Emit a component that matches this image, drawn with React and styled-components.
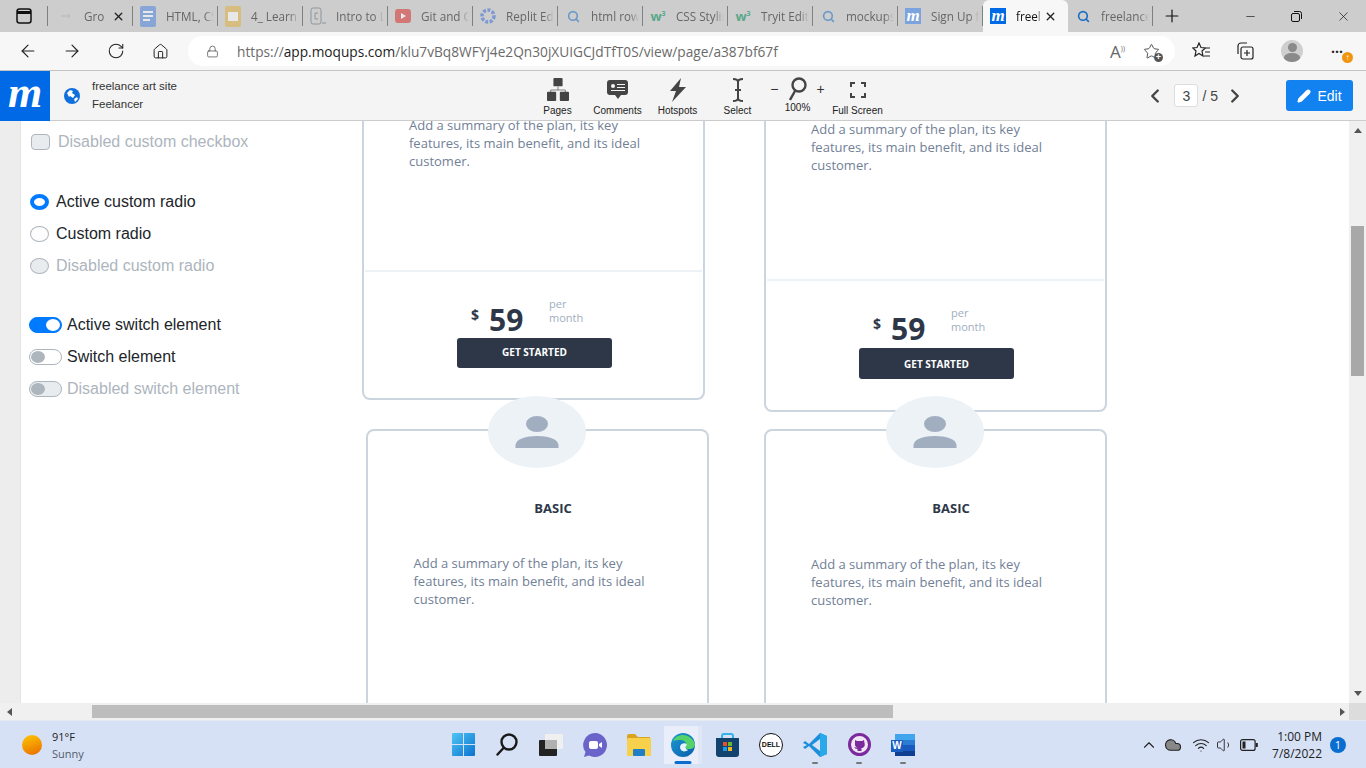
import React from 'react';
import styled, { createGlobalStyle } from 'styled-components';
import { ArrowLeft, ArrowRight, RotateCw, Home, Lock, Star, ChevronLeft, ChevronRight, Pencil, X, Plus, Minus, Search, ChevronUp, Cloud, Wifi, Volume1 } from 'lucide-react';

const GlobalStyle = createGlobalStyle`
  html, body { margin: 0; padding: 0; overflow: hidden; }
  * { box-sizing: border-box; }
  body { font-family: "Liberation Sans", Arial, sans-serif; }
`;

const tabs = [
  { title: 'Gro', icon: 'arrow', close: true, first: true },
  { title: 'HTML, CSS', icon: 'docs' },
  { title: '4_ Learn', icon: 'slides' },
  { title: 'Intro to L', icon: 'code' },
  { title: 'Git and G', icon: 'yt' },
  { title: 'Replit Ed', icon: 'replit' },
  { title: 'html row', icon: 'search' },
  { title: 'CSS Stylin', icon: 'w3' },
  { title: 'Tryit Edito', icon: 'w3' },
  { title: 'mockups', icon: 'search' },
  { title: 'Sign Up f', icon: 'moqups' },
  { title: 'freel', icon: 'moqupsActive', close: true, active: true },
  { title: 'freelance', icon: 'searchActive' },
];

const TabIcon = ({ kind }) => {
  if (kind === 'arrow') return <Faded><svg width="16" height="16" viewBox="0 0 16 16"><path d="M3 8h9M10 6l2 2-2 2" stroke="#9aa" fill="none" /></svg></Faded>;
  if (kind === 'docs') return <Faded><svg width="16" height="21" viewBox="0 0 16 21"><rect width="16" height="21" rx="2" fill="#4f86e0" /><path d="M3 6h10M3 10h10M3 14h7" stroke="#fff" strokeWidth="2" /></svg></Faded>;
  if (kind === 'slides') return <Faded><svg width="16" height="21" viewBox="0 0 16 21"><rect width="16" height="21" rx="2" fill="#e0b040" /><rect x="3" y="6" width="10" height="9" fill="#fff" /></svg></Faded>;
  if (kind === 'code') return <Faded><svg width="16" height="18" viewBox="0 0 16 18"><rect x="1" y="1" width="10" height="16" rx="2" fill="none" stroke="#567" /><path d="M8 6H5v6h3M12 16h4" stroke="#567" fill="none" /></svg></Faded>;
  if (kind === 'yt') return <Faded><svg width="16" height="16" viewBox="0 0 16 16"><rect y="1" width="16" height="14" rx="3" fill="#d93030" /><path d="M6 5l5 3-5 3z" fill="#fff" /></svg></Faded>;
  if (kind === 'replit') return <Faded><svg width="16" height="18" viewBox="0 0 16 18"><circle cx="8" cy="9" r="6" fill="none" stroke="#3d6fd8" strokeWidth="3.5" strokeDasharray="3 1.5" /></svg></Faded>;
  if (kind === 'w3') return <W3Mark>w<sup>3</sup></W3Mark>;
  if (kind === 'moqups') return <Favicon>m</Favicon>;
  if (kind === 'moqupsActive') return <Favicon $active>m</Favicon>;
  return <Faded $solid={kind === 'searchActive'}><Search size={13} color="#1a6ec4" strokeWidth={3} /></Faded>;
};

const Pages = () => (
  <svg width="22" height="24" viewBox="0 0 24 26" fill="#444">
    <rect x="7" y="0" width="10" height="9" rx="1" />
    <path d="M12 9v4M4 16v-3h16v3" stroke="#777" fill="none" />
    <rect x="0" y="15" width="10" height="10" rx="1" />
    <rect x="14" y="15" width="10" height="10" rx="1" />
  </svg>
);
const Comment = () => (
  <svg width="21" height="20" viewBox="0 0 21 20"><path d="M3 0h15a3 3 0 0 1 3 3v9a3 3 0 0 1-3 3h-4l-3 4-3-4H3a3 3 0 0 1-3-3V3a3 3 0 0 1 3-3z" fill="#444" /><circle cx="6" cy="6" r="2" fill="#f4f4f4" /><path d="M10 4.500h8M10 7.500h8M4 10.500h14" stroke="#f4f4f4" /></svg>
);
const Bolt = () => (
  <svg width="16" height="24" viewBox="0 0 16 24"><path d="M11 0L0 13h6l-4 11 14-15H9z" fill="#444" /></svg>
);
const Cursor = () => (
  <svg width="12" height="24" viewBox="0 0 12 24" fill="none" stroke="#444" strokeWidth="2"><path d="M1 1c3 0 5 1 5 3v16c0 2-2 3-5 3M11 1C8 1 6 2 6 4v16c0 2 2 3 5 3M3 12h6" /></svg>
);
const Magnifier = () => (
  <svg width="18" height="24" viewBox="0 0 18 24" fill="none" stroke="#444" strokeWidth="2.400"><circle cx="10" cy="8" r="6.500" /><path d="M6 14l-5 9" /></svg>
);
const Corners = () => (
  <svg width="16" height="16" viewBox="0 0 16 16" fill="none" stroke="#444" strokeWidth="2"><path d="M1 5V1h4M11 1h4v4M15 11v4h-4M5 15H1v-4" /></svg>
);
const Globe = () => (
  <svg width="16" height="16" viewBox="0 0 16 16"><circle cx="8" cy="8" r="8" fill="#0f6fdc" /><path d="M3 5l3-3 3 1-1 2 3 2-2 3-3-2-1 1zM10 11l3-2 1 2-3 3z" fill="#fff" /></svg>
);
const Person = () => (
  <svg width="44" height="32" viewBox="0 0 44 32" fill="#a0aec0"><ellipse cx="22" cy="8" rx="11" ry="8" /><path d="M0.500 32v-3C1 23 11 20 22 20s21 3 21.500 9v3z" /></svg>
);

const Windows = () => (
  <svg width="23" height="23" viewBox="0 0 23 23"><defs><linearGradient id="win" x1="0" y1="0" x2="1" y2="1"><stop offset="0" stopColor="#4fc6f5" /><stop offset="1" stopColor="#0a72cf" /></linearGradient></defs><path d="M1 0h10v11H0V1a1 1 0 0 1 1-1zM12 0h10a1 1 0 0 1 1 1v10H12zM0 12h11v11H1a1 1 0 0 1-1-1zM12 12h11v10a1 1 0 0 1-1 1H12z" fill="url(#win)" /></svg>
);
const TaskSearch = () => (
  <svg width="22" height="23" viewBox="0 0 22 23" fill="none" stroke="#1a1a1a" strokeWidth="2.400"><circle cx="13" cy="9" r="7.500" /><path d="M7.500 15l-6 6.500" strokeLinecap="round" /></svg>
);
const TaskView = () => (
  <svg width="24" height="22" viewBox="0 0 24 22"><rect x="0" y="6" width="18" height="16" rx="1" fill="#222" /><rect x="6" y="0" width="18" height="15" rx="1" fill="#f0f0f0" /><rect x="6" y="6" width="12" height="9" fill="#b0b0b0" /></svg>
);
const Meet = () => (
  <svg width="24" height="24" viewBox="0 0 24 24"><path d="M12 0a12 12 0 1 1-6 22.400L1 24l1.500-5A12 12 0 0 1 12 0z" fill="#6a63c9" /><rect x="6" y="8" width="9" height="8" rx="2" fill="#fff" /><path d="M16 11l3-2v6l-3-2z" fill="#fff" /></svg>
);
const Folder = () => (
  <svg width="24" height="22" viewBox="0 0 24 22"><path d="M0 2a2 2 0 0 1 2-2h6l3 3h12v4H0z" fill="#d9a520" /><rect y="4" width="24" height="18" rx="1.500" fill="#f7d04c" /><rect x="6" y="15" width="12" height="7" rx="1" fill="#1e7fc7" /></svg>
);
const Edge = () => (
  <svg width="24" height="24" viewBox="0 0 24 24"><defs><linearGradient id="edge" x1="0" y1="0" x2="1" y2="1"><stop offset="0" stopColor="#1d9ad6" /><stop offset="1" stopColor="#0a5ea8" /></linearGradient></defs><circle cx="12" cy="12" r="12" fill="url(#edge)" /><path d="M2 8C5 0 20-1 24 11c0 4-3 5-6 5-4 0-4-2-3-4 1-3-3-7-13-4z" fill="#54d36b" /><path d="M9 14c0-4 6-5 7-2-2 1-2 4 1 5-4 3-8 1-8-3z" fill="#e8f4fb" /></svg>
);
const Store = () => (
  <svg width="23" height="24" viewBox="0 0 23 24"><path d="M6 5V3a2 2 0 0 1 2-2h7a2 2 0 0 1 2 2v2" fill="none" stroke="#35b3e8" strokeWidth="2" /><path d="M0 5h23v16a3 3 0 0 1-3 3H3a3 3 0 0 1-3-3z" fill="#12426e" /><rect x="7" y="9" width="4" height="4" fill="#e8502c" /><rect x="12" y="9" width="4" height="4" fill="#6ab82c" /><rect x="7" y="14" width="4" height="4" fill="#1e9be8" /><rect x="12" y="14" width="4" height="4" fill="#f5b920" /></svg>
);
const VsCode = () => (
  <svg width="24" height="24" viewBox="0 0 24 24"><path d="M17 0l7 3v18l-7 3L6 13l-4 3-2-2 4-2-4-2 2-2 4 3z" fill="#1b8fdc" /><path d="M17 6v12l-8-6z" fill="#d6e1f6" /><path d="M17 0l7 3v18l-7 3z" fill="#29a8ea" /></svg>
);
const Github = () => (
  <svg width="23" height="23" viewBox="0 0 23 23"><circle cx="11.500" cy="11.500" r="10" fill="#f0e6f5" stroke="#7a2a9c" strokeWidth="3" /><path d="M7 7l2 1h5l2-1 .500 3c1 3-1 5-3 5v3h-4v-2c-2 0-3-1-3-2 1 0 2 1 3 1-2-1-3-3-2.500-5z" fill="#7a2a9c" /></svg>
);
const WordIcon = () => (
  <DocIcon>
    <svg width="24" height="22" viewBox="0 0 24 22"><rect x="4" width="20" height="22" rx="1" fill="#2b7cd3" /><rect x="4" y="0" width="20" height="6" fill="#41a5ee" /><rect x="4" y="11" width="20" height="6" fill="#185abd" /><rect x="4" y="17" width="20" height="5" fill="#103f91" /></svg>
    <WordBadge>W</WordBadge>
  </DocIcon>
);

const Summary = ({ $left, $top, $height }) => (
  <SummaryText $left={$left} $top={$top} $height={$height}>
    Add a summary of the plan, its key<br />
    features, its main benefit, and its ideal<br />
    customer.
  </SummaryText>
);

const PricedCard = ({ height, summaryTop, summaryHeight, priceHeight, buttonHeight }) => (
  <PlanCard $open $height={height}>
    <Summary $left={45} $top={summaryTop} $height={summaryHeight} />
    <Divider />
    <PriceRow $height={priceHeight}>
      <Dollar>$</Dollar>
      <Amount>59</Amount>
      <PerMonth>per<br />month</PerMonth>
    </PriceRow>
    <StartButton $height={buttonHeight}>GET STARTED</StartButton>
  </PlanCard>
);

const BasicCard = ({ left, summaryGap, shifted }) => (
  <PlanCard $height={320} $shifted={shifted}>
    <AvatarBubble><Person /></AvatarBubble>
    <PlanName>BASIC</PlanName>
    <Summary $left={left} $top={summaryGap} />
  </PlanCard>
);

const App = () => (
  <Screen>
    <GlobalStyle />
    <TabStrip>
      <WindowMenu><svg width="16" height="16" viewBox="0 0 16 16" fill="none" stroke="#111" strokeWidth="1.500"><rect x="1" y="1" width="14" height="14" rx="2.500" /><path d="M1 4.500h14" strokeWidth="3" /></svg></WindowMenu>
      {tabs.map((tab) => (
        <Tab key={tab.title} $active={tab.active} $first={tab.first}>
          <TabIconSlot><TabIcon kind={tab.icon} /></TabIconSlot>
          <TabTitle $active={tab.active} $short={tab.close}>{tab.title}</TabTitle>
          {tab.close && <TabClose><X size={13} strokeWidth={2.500} color="#222" /></TabClose>}
        </Tab>
      ))}
      <NewTab><Plus size={20} strokeWidth={1.400} color="#111" /></NewTab>
      <WindowButtons>
        <Minus size={13} strokeWidth={1.200} color="#111" />
        <svg width="11" height="11" viewBox="0 0 11 11" fill="none" stroke="#111"><rect x="0.500" y="2.500" width="8" height="8" rx="1.500" /><path d="M3 .500h5.500a2 2 0 0 1 2 2V8" /></svg>
        <X size={15} strokeWidth={1.100} color="#111" />
      </WindowButtons>
    </TabStrip>

    <AddressBar>
      <NavIcon><ArrowLeft size={20} strokeWidth={1.400} color="#222" /></NavIcon>
      <NavIcon><ArrowRight size={20} strokeWidth={1.400} color="#222" /></NavIcon>
      <NavIcon><RotateCw size={18} strokeWidth={1.400} color="#222" /></NavIcon>
      <NavIcon><Home size={17} strokeWidth={1.400} color="#222" /></NavIcon>
      <UrlPill>
        <Lock size={13} strokeWidth={1.300} color="#444" />
        <UrlText>https://<strong>app.moqups.com</strong>/klu7vBq8WFYj4e2Qn30jXUIGCJdTfT0S/view/page/a387bf67f</UrlText>
        <ReadAloud>A<small>))</small></ReadAloud>
        <FavAdd><Star size={17} strokeWidth={1.300} color="#444" /><FavDot>+</FavDot></FavAdd>
      </UrlPill>
      <BarIcon $width={44}><svg width="18" height="18" viewBox="0 0 18 18" fill="none" stroke="#222" strokeWidth="1.200"><path d="M7 1l2 4.500 4.500.500-3.500 3 1 5-4-2.500L3 14l1-5L.8 6l4.200-.500zM13 6h5M13 10h5M12 14h6" /></svg></BarIcon>
      <BarIcon $width={44}><svg width="18" height="18" viewBox="0 0 18 18" fill="none" stroke="#222" strokeWidth="1.200"><rect x="5" y="5" width="12" height="12" rx="2" /><path d="M11 8v6M8 11h6M2 12V4a3 3 0 0 1 3-3h6" /></svg></BarIcon>
      <BarIcon $width={50}><ProfilePic><ProfileHead /><ProfileBody /></ProfilePic></BarIcon>
      <MenuDots>···<UpdateDot>↑</UpdateDot></MenuDots>
    </AddressBar>

    <AppHeader>
      <Logo>m</Logo>
      <ProjectInfo>
        <Globe />
        <ProjectNames>
          <span>freelance art site</span>
          <span>Feelancer</span>
        </ProjectNames>
      </ProjectInfo>
      <Tools>
        <Tool><ToolIcon><Pages /></ToolIcon><ToolLabel>Pages</ToolLabel></Tool>
        <Tool><ToolIcon><Comment /></ToolIcon><ToolLabel>Comments</ToolLabel></Tool>
        <Tool><ToolIcon><Bolt /></ToolIcon><ToolLabel>Hotspots</ToolLabel></Tool>
        <Tool><ToolIcon><Cursor /></ToolIcon><ToolLabel>Select</ToolLabel></Tool>
        <Tool>
          <ZoomIcon><span>−</span><Magnifier /><span>+</span></ZoomIcon>
          <ToolLabel $raised>100%</ToolLabel>
        </Tool>
        <Tool><ToolIcon><Corners /></ToolIcon><ToolLabel>Full Screen</ToolLabel></Tool>
      </Tools>
      <Pager>
        <ChevronLeft size={22} strokeWidth={2.600} color="#444" />
        <PageBox>3</PageBox>
        <PageTotal>/ 5</PageTotal>
        <ChevronRight size={22} strokeWidth={2.600} color="#444" />
      </Pager>
      <EditButton><Pencil size={14} strokeWidth={2.400} color="#fff" fill="#fff" />Edit</EditButton>
    </AppHeader>

    <Viewport>
      <Gutter />
      <Canvas>
        <SidePanel>
          <FormGroup>
            <FormRow $muted><CheckBox />Disabled custom checkbox</FormRow>
          </FormGroup>
          <FormGroup $gap={28}>
            <FormRow><RadioDot $on />Active custom radio</FormRow>
            <FormRow><RadioDot />Custom radio</FormRow>
            <FormRow $muted><RadioDot $off />Disabled custom radio</FormRow>
          </FormGroup>
          <FormGroup $gap={27}>
            <FormRow><SwitchTrack $on><SwitchKnob $on /></SwitchTrack>Active switch element</FormRow>
            <FormRow><SwitchTrack><SwitchKnob /></SwitchTrack>Switch element</FormRow>
            <FormRow $muted><SwitchTrack $off><SwitchKnob /></SwitchTrack>Disabled switch element</FormRow>
          </FormGroup>
        </SidePanel>
        <PlanColumn $gap={29}>
          <PricedCard height={279} summaryTop={-5} summaryHeight={154} priceHeight={66} buttonHeight={30} />
          <BasicCard left={45.5} summaryGap={38} shifted />
        </PlanColumn>
        <PlanColumn $gap={17}>
          <PricedCard height={291} summaryTop={-1} summaryHeight={159} priceHeight={67} buttonHeight={31} />
          <BasicCard left={45} summaryGap={39} />
        </PlanColumn>
      </Canvas>
      <VScroll>
        <ScrollArrow $dir="up" />
        <VThumb />
        <ScrollArrow $dir="down" />
      </VScroll>
    </Viewport>

    <HScroll>
      <ScrollArrow $dir="left" />
      <HThumb />
      <ScrollArrow $dir="right" />
      <ScrollCorner />
    </HScroll>

    <Taskbar>
      <Weather>
        <Sun />
        <WeatherText><b>91°F</b><span>Sunny</span></WeatherText>
      </Weather>
      <TaskIcons>
        <TaskIcon><Windows /></TaskIcon>
        <TaskIcon><TaskSearch /></TaskIcon>
        <TaskIcon><TaskView /></TaskIcon>
        <TaskIcon><Meet /></TaskIcon>
        <TaskIcon><Folder /></TaskIcon>
        <TaskIcon $active><Edge /></TaskIcon>
        <TaskIcon><Store /></TaskIcon>
        <TaskIcon><DellMark>DELL</DellMark></TaskIcon>
        <TaskIcon $running><VsCode /></TaskIcon>
        <TaskIcon $running><Github /></TaskIcon>
        <TaskIcon $running><WordIcon /></TaskIcon>
      </TaskIcons>
      <Tray>
        <TrayIcon><ChevronUp size={18} strokeWidth={1.500} color="#222" /></TrayIcon>
        <TrayIcon><Cloud size={18} strokeWidth={1.500} color="#222" fill="#888" /></TrayIcon>
        <TrayIcon $wide><Wifi size={18} strokeWidth={1.500} color="#222" /></TrayIcon>
        <TrayIcon><Volume1 size={18} strokeWidth={1.200} color="#222" /></TrayIcon>
        <TrayIcon><svg width="18" height="12" viewBox="0 0 18 12" fill="none" stroke="#222" strokeWidth="1.200"><rect x="0.600" y="0.600" width="14.500" height="10.800" rx="2" /><rect x="2.500" y="2.500" width="3" height="7" fill="#222" stroke="none" /><path d="M16.800 4v4" strokeWidth="2" /></svg></TrayIcon>
        <Clock><span>1:00 PM</span><span>7/8/2022</span></Clock>
        <NotifyBadge>1</NotifyBadge>
      </Tray>
    </Taskbar>
  </Screen>
);

export default App;

const Screen = styled.div`
  width: 1366px;
  height: 768px;
  display: flex;
  flex-direction: column;
  overflow: hidden;
  background: #fff;
`;

const TabStrip = styled.div`
  height: 32px;
  flex: none;
  display: flex;
  background: #cdcdcd;
  font-family: "Open Sans", sans-serif;
`;
const WindowMenu = styled.div`
  width: 48px;
  height: 20px;
  margin-top: 6px;
  display: flex;
  align-items: center;
  justify-content: center;
  border-right: 1px solid #808080;
`;
const Tab = styled.div`
  width: 85px;
  height: 32px;
  flex: none;
  display: flex;
  align-items: center;
  padding-left: ${(p) => (p.$first ? '10px' : '7px')};
  gap: 10px;
  position: relative;
  background: ${(p) => (p.$active ? '#f7f7f7' : 'transparent')};
  border-radius: ${(p) => (p.$active ? '6px 6px 0 0' : '0')};
  &::after {
    content: '';
    position: absolute;
    right: 0;
    top: 6px;
    height: 20px;
    width: 1px;
    background: ${(p) => (p.$active ? 'transparent' : '#808080')};
  }
`;
const TabIconSlot = styled.div`
  width: 16px;
  flex: none;
  display: flex;
  justify-content: center;
`;
const Faded = styled.div`
  display: flex;
  opacity: ${(p) => (p.$solid ? 1 : 0.55)};
`;
const W3Mark = styled.span`
  font: bold 13px "Open Sans", sans-serif;
  color: #5aa88a;
  sup { font-size: 7px; }
`;
const Favicon = styled.span`
  width: 16px;
  height: 16px;
  display: flex;
  align-items: center;
  justify-content: center;
  background: ${(p) => (p.$active ? '#0069e6' : '#7ba3de')};
  color: #fff;
  font: italic bold 17px/14px "Liberation Serif", serif;
`;
const TabTitle = styled.span`
  width: ${(p) => (p.$short ? '26px' : '48px')};
  overflow: hidden;
  white-space: nowrap;
  font-size: 11.7px;
  color: ${(p) => (p.$active ? '#111' : '#666')};
  mask-image: linear-gradient(to right, #000 80%, transparent);
`;
const TabClose = styled.div`
  display: flex;
  margin-left: -8px;
`;
const NewTab = styled.div`
  width: 38px;
  display: flex;
  align-items: center;
  justify-content: center;
`;
const WindowButtons = styled.div`
  margin-left: auto;
  width: 130px;
  display: flex;
  align-items: center;
  justify-content: space-between;
  padding: 0 15px 0 8px;
`;

const AddressBar = styled.div`
  height: 39px;
  flex: none;
  display: flex;
  align-items: center;
  padding-left: 6px;
  background: #f7f7f7;
  border-bottom: 1px solid #c4c4c4;
`;
const NavIcon = styled.div`
  width: 44px;
  display: flex;
  justify-content: center;
`;
const UrlPill = styled.div`
  width: 987px;
  height: 30px;
  margin: 0 4px 0 6px;
  padding: 0 15px 0 18px;
  display: flex;
  align-items: center;
  background: #fff;
  border-radius: 15px;
`;
const UrlText = styled.span`
  margin-left: 18px;
  font: 13.7px "Open Sans", sans-serif;
  color: #6a6a6a;
  white-space: nowrap;
  strong { font-weight: 400; color: #222; }
`;
const ReadAloud = styled.span`
  margin-left: auto;
  font: 17px "Open Sans", sans-serif;
  color: #666;
  small { font-size: 7px; vertical-align: 7px; }
`;
const FavAdd = styled.div`
  display: flex;
  position: relative;
  margin-left: 18px;
`;
const FavDot = styled.span`
  position: absolute;
  right: -3px;
  bottom: -2px;
  width: 9px;
  height: 9px;
  border-radius: 50%;
  background: #555;
  color: #fff;
  font: bold 9px/9px "Liberation Sans", sans-serif;
  text-align: center;
`;
const BarIcon = styled.div`
  width: ${(p) => p.$width}px;
  flex: none;
  display: flex;
  justify-content: center;
`;
const ProfilePic = styled.div`
  width: 22px;
  height: 22px;
  border-radius: 50%;
  background: #cfcfcf;
  display: flex;
  flex-direction: column;
  align-items: center;
  overflow: hidden;
  padding-top: 3px;
`;
const ProfileHead = styled.div`
  width: 9px;
  height: 10px;
  border-radius: 50%;
  background: #8a8a8a;
`;
const ProfileBody = styled.div`
  width: 16px;
  height: 10px;
  margin-top: 1px;
  border-radius: 50% 50% 0 0;
  background: #8a8a8a;
`;
const MenuDots = styled.div`
  position: relative;
  margin-left: 14px;
  font: bold 14px "Open Sans", sans-serif;
  color: #222;
`;
const UpdateDot = styled.span`
  position: absolute;
  left: 11px;
  top: 10px;
  width: 11px;
  height: 11px;
  border-radius: 50%;
  background: #f0960e;
  color: #fff;
  font: 8px/11px "Liberation Sans", sans-serif;
  text-align: center;
`;

const AppHeader = styled.div`
  height: 50px;
  flex: none;
  display: flex;
  align-items: center;
  padding-right: 13px;
  background: #f4f4f4;
  border-bottom: 1px solid #ccc;
`;
const Logo = styled.div`
  width: 50px;
  height: 50px;
  display: flex;
  align-items: center;
  justify-content: center;
  padding-bottom: 6px;
  background: #0069e6;
  color: #fff;
  font: italic bold 44px/44px "Liberation Serif", serif;
`;
const ProjectInfo = styled.div`
  width: 477.5px;
  padding-left: 14px;
  display: flex;
  align-items: center;
  gap: 12px;
`;
const ProjectNames = styled.div`
  display: flex;
  flex-direction: column;
  gap: 3px;
  font-size: 11.5px;
  line-height: 15px;
  color: #333;
`;
const Tools = styled.div`
  display: flex;
`;
const Tool = styled.div`
  width: 60px;
  height: 49px;
  display: flex;
  flex-direction: column;
  align-items: center;
  padding-top: 5px;
`;
const ToolIcon = styled.div`
  height: 28px;
  display: flex;
  align-items: center;
  justify-content: center;
`;
const ZoomIcon = styled(ToolIcon)`
  gap: 10px;
  color: #333;
  font-size: 14px;
  height: 25px;
`;
const ToolLabel = styled.span`
  margin-top: 1px;
  font-size: 10px;
  line-height: 12px;
  white-space: nowrap;
  color: #222;
`;
const Pager = styled.div`
  margin-left: auto;
  display: flex;
  align-items: center;
  font-size: 14px;
  color: #444;
`;
const PageBox = styled.div`
  width: 24px;
  height: 23px;
  margin: 0 4px 0 8px;
  display: flex;
  align-items: center;
  justify-content: center;
  background: #fff;
  border: 1px solid #ddd;
  border-radius: 3px;
`;
const PageTotal = styled.span`
  margin-right: 6px;
`;
const EditButton = styled.div`
  width: 67px;
  height: 31px;
  margin-left: 40px;
  display: flex;
  align-items: center;
  justify-content: center;
  gap: 6px;
  background: #1282f0;
  border-radius: 3px;
  color: #fff;
  font-size: 14px;
`;

const Viewport = styled.div`
  flex: 1;
  min-height: 0;
  display: flex;
`;
const Gutter = styled.div`
  width: 21px;
  flex: none;
  background: #ededed;
  border-right: 1px solid #e4e4e4;
`;
const Canvas = styled.div`
  flex: 1;
  display: flex;
  gap: 55px;
  overflow: hidden;
  background: #fff;
`;
const SidePanel = styled.div`
  width: 286px;
  flex: none;
  padding: 5px 0 0 8px;
`;
const FormGroup = styled.div`
  margin-top: ${(p) => p.$gap || 0}px;
`;
const FormRow = styled.div`
  height: 32px;
  display: flex;
  align-items: center;
  gap: 7px;
  font-size: 16px;
  color: ${(p) => (p.$muted ? '#adb5bd' : '#212529')};
  white-space: nowrap;
`;
const CheckBox = styled.span`
  width: 19px;
  height: 16px;
  margin: 0 1px 0 2px;
  background: #e9ecef;
  border: 1px solid #adb5bd;
  border-radius: 4px;
`;
const RadioDot = styled.span`
  width: 19px;
  height: 16px;
  margin-left: 1px;
  border-radius: 50%;
  background: ${(p) => (p.$off ? '#e9ecef' : p.$on ? '#fff' : '#fdfdfd')};
  border: ${(p) => (p.$on ? '4px solid #007bff' : '1px solid #adb5bd')};
`;
const SwitchTrack = styled.span`
  width: 33px;
  height: 16px;
  padding: 1px;
  display: flex;
  justify-content: ${(p) => (p.$on ? 'flex-end' : 'flex-start')};
  margin-right: -2px;
  border-radius: 8px;
  background: ${(p) => (p.$on ? '#007bff' : p.$off ? '#e9ecef' : '#fff')};
  border: 1px solid ${(p) => (p.$on ? '#007bff' : '#adb5bd')};
`;
const SwitchKnob = styled.span`
  width: 14px;
  height: 12px;
  border-radius: 50%;
  background: ${(p) => (p.$on ? '#fff' : '#adb5bd')};
`;

const PlanColumn = styled.div`
  width: 347px;
  flex: none;
  display: flex;
  flex-direction: column;
  gap: ${(p) => p.$gap}px;
`;
const PlanCard = styled.div`
  width: 343px;
  height: ${(p) => p.$height}px;
  flex: none;
  position: relative;
  margin-left: ${(p) => (p.$shifted ? '4px' : '0')};
  background: #fff;
  border: 2px solid #cbd5e0;
  border-top-width: ${(p) => (p.$open ? '0' : '2px')};
  border-radius: ${(p) => (p.$open ? '0 0 8px 8px' : '8px')};
  font-family: "Open Sans", sans-serif;
`;
const SummaryText = styled.p`
  margin: ${(p) => p.$top}px 0 0 ${(p) => p.$left}px;
  height: ${(p) => (p.$height ? `${p.$height}px` : 'auto')};
  font-size: 13px;
  line-height: 18px;
  color: #718096;
`;
const Divider = styled.div`
  height: 2px;
  margin: 0 1px;
  background: #edf2f7;
`;
const PriceRow = styled.div`
  height: ${(p) => p.$height}px;
  padding-left: 107px;
  display: flex;
  align-items: flex-start;
  color: #2d3748;
`;
const Dollar = styled.span`
  width: 18px;
  margin-top: 35px;
  font-size: 14px;
  line-height: 16px;
  font-weight: 700;
`;
const Amount = styled.span`
  width: 60px;
  margin-top: 32px;
  font-size: 30px;
  line-height: 32px;
  font-weight: 700;
`;
const PerMonth = styled.span`
  margin-top: 25px;
  font-size: 11px;
  line-height: 14px;
  color: #a0aec0;
`;
const StartButton = styled.div`
  width: 155px;
  height: ${(p) => p.$height}px;
  margin-left: 93px;
  padding-bottom: ${(p) => (p.$height === 30 ? '2px' : '0')};
  display: flex;
  align-items: center;
  justify-content: center;
  background: #2d3748;
  border-radius: 3px;
  color: #fff;
  font-size: 10px;
  font-weight: 700;
`;
const AvatarBubble = styled.div`
  position: absolute;
  left: 120px;
  top: -35px;
  width: 98px;
  height: 72px;
  display: flex;
  align-items: center;
  justify-content: center;
  border-radius: 50%;
  background: #edf2f7;
`;
const PlanName = styled.div`
  padding: 69px 0 0 31px;
  text-align: center;
  font-size: 13px;
  line-height: 16px;
  font-weight: 700;
  color: #2d3748;
`;

const VScroll = styled.div`
  width: 17px;
  flex: none;
  display: flex;
  flex-direction: column;
  align-items: center;
  background: #f0f0f0;
`;
const VThumb = styled.div`
  width: 13px;
  height: 150px;
  margin-top: 93px;
  background: #a8a8a8;
`;
const HScroll = styled.div`
  height: 17px;
  flex: none;
  display: flex;
  align-items: center;
  background: #f0f0f0;
`;
const HThumb = styled.div`
  width: 801px;
  height: 13px;
  margin-left: 80px;
  background: #bdbdbd;
`;
const arrowShape = {
  up: 'border-width: 0 4px 5px; border-color: transparent transparent #555; margin-top: 7px;',
  down: 'border-width: 5px 4px 0; border-color: #555 transparent transparent; margin-top: auto; margin-bottom: 7px;',
  left: 'border-width: 4px 5px 4px 0; border-color: transparent #555 transparent transparent; margin-left: 7px;',
  right: 'border-width: 4px 0 4px 5px; border-color: transparent transparent transparent #555; margin-left: auto; margin-right: 4px;',
};
const ScrollArrow = styled.span`
  width: 0;
  height: 0;
  flex: none;
  border-style: solid;
  ${(p) => arrowShape[p.$dir]}
`;
const ScrollCorner = styled.div`
  width: 17px;
  height: 17px;
  background: #dcdcdc;
`;

const Taskbar = styled.div`
  height: 48px;
  flex: none;
  display: flex;
  align-items: center;
  background: #d6e1f6;
  border-top: 1px solid #e4e8f0;
`;
const Weather = styled.div`
  width: 441px;
  padding-left: 22px;
  display: flex;
  align-items: center;
  gap: 10px;
`;
const Sun = styled.div`
  width: 20px;
  height: 20px;
  border-radius: 50%;
  background: linear-gradient(160deg, #ffc800, #e86a00);
`;
const WeatherText = styled.div`
  display: flex;
  flex-direction: column;
  gap: 2px;
  font: 11px/15px "Open Sans", sans-serif;
  color: #555c6a;
  b { font-weight: 400; color: #222; }
`;
const TaskIcons = styled.div`
  display: flex;
`;
const TaskIcon = styled.div`
  width: 44px;
  height: 38px;
  display: flex;
  align-items: center;
  justify-content: center;
  position: relative;
  border-radius: 4px;
  background: ${(p) => (p.$active ? 'linear-gradient(to right, transparent 3px, #e9eefa 3px, #e9eefa 37px, #dfe7f7 37px, #dfe7f7 41px, transparent 41px)' : 'transparent')};
  ${(p) => (p.$active || p.$running) && `
    &::after {
      content: '';
      position: absolute;
      left: 50%;
      bottom: 0;
      transform: translateX(-50%);
      width: ${p.$active ? '17px' : '6px'};
      height: ${p.$active ? '3px' : '2px'};
      border-radius: 2px;
      background: ${p.$active ? '#0a6ed1' : '#777'};
    }
  `}
`;
const DellMark = styled.div`
  width: 24px;
  height: 24px;
  display: flex;
  align-items: center;
  justify-content: center;
  border: 1.5px solid #111;
  border-radius: 50%;
  background: #fff;
  color: #111;
  font: bold 7px "Liberation Sans", sans-serif;
`;
const DocIcon = styled.div`
  position: relative;
  display: flex;
`;
const WordBadge = styled.span`
  position: absolute;
  left: 0;
  top: 6px;
  width: 12px;
  height: 12px;
  background: #1a5fc0;
  color: #fff;
  font: bold 10px/12px "Liberation Sans", sans-serif;
  text-align: center;
`;
const Tray = styled.div`
  margin-left: auto;
  padding-right: 20px;
  display: flex;
  align-items: center;
`;
const TrayIcon = styled.div`
  width: 24px;
  margin-left: ${(p) => (p.$wide ? '4px' : '0')};
  display: flex;
  justify-content: center;
`;
const Clock = styled.div`
  width: 61px;
  margin-right: 8px;
  display: flex;
  flex-direction: column;
  align-items: flex-end;
  gap: 2px;
  font: 12px/15px "Open Sans", sans-serif;
  color: #222;
`;
const NotifyBadge = styled.div`
  width: 16px;
  height: 16px;
  border-radius: 50%;
  background: #0a6ed1;
  color: #fff;
  font: 11px/16px "Open Sans", sans-serif;
  text-align: center;
`;
